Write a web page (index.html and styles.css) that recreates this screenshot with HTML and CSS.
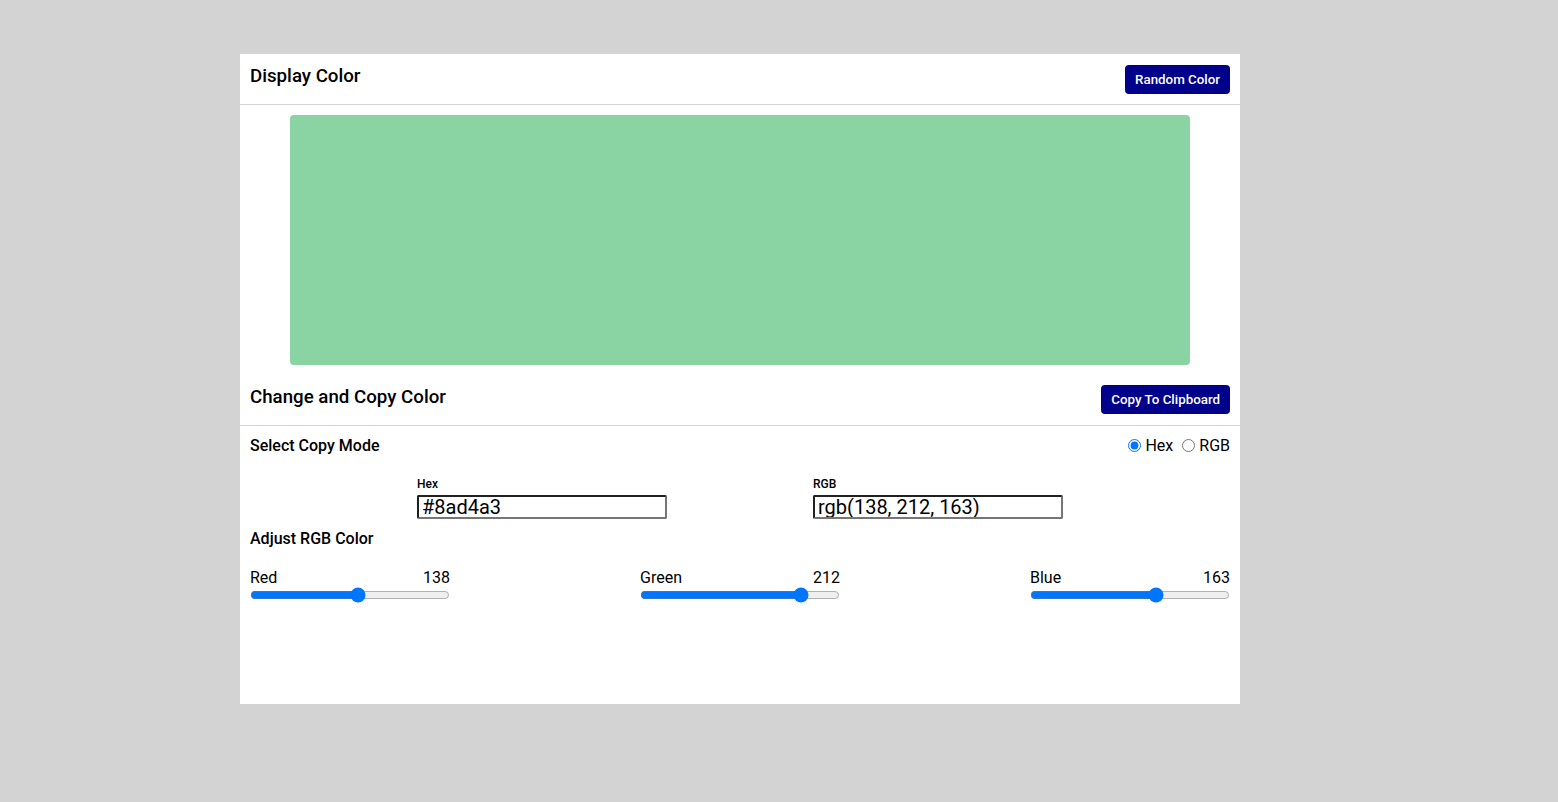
FILE: index.html
```html
<!DOCTYPE html>
<html>
<head>
<meta charset="utf-8">
<link rel="stylesheet" href="styles.css">
</head>
<body>
<div class="card">
  <div class="head head-top">
    <h3 class="title">Display Color</h3>
    <button class="btn">Random Color</button>
  </div>
  <div class="swatch-wrap">
    <div class="swatch" style="background:#8ad4a3"></div>
  </div>
  <div class="head head-second">
    <h3 class="title">Change and Copy Color</h3>
    <button class="btn">Copy To Clipboard</button>
  </div>
  <div class="body">
    <div class="mode-row">
      <h4 class="sub">Select Copy Mode</h4>
      <div class="radios">
        <label class="radio"><input type="radio" name="mode" checked>Hex</label>
        <label class="radio radio-second"><input type="radio" name="mode">RGB</label>
      </div>
    </div>
    <div class="inputs">
      <div class="field">
        <label class="field-label">Hex</label>
        <input class="text" type="text" value="#8ad4a3">
      </div>
      <div class="field">
        <label class="field-label">RGB</label>
        <input class="text" type="text" value="rgb(138, 212, 163)">
      </div>
    </div>
    <h4 class="sub sub-adjust">Adjust RGB Color</h4>
    <div class="sliders">
      <div class="slider">
        <div class="slider-top"><span>Red</span><span>138</span></div>
        <input class="range" type="range" min="0" max="255" value="138">
      </div>
      <div class="slider">
        <div class="slider-top"><span>Green</span><span>212</span></div>
        <input class="range" type="range" min="0" max="255" value="212">
      </div>
      <div class="slider">
        <div class="slider-top"><span>Blue</span><span>163</span></div>
        <input class="range" type="range" min="0" max="255" value="163">
      </div>
    </div>
  </div>
</div>
</body>
</html>
```

FILE: styles.css
```css
html, body {
  margin: 0;
  padding: 0;
}
body {
  background: #d3d3d3;
  font-family: Roboto, "Liberation Sans", sans-serif;
  color: #000;
  padding-top: 54px;
  padding-left: 240px;
  height: 802px;
  box-sizing: border-box;
}
.card {
  width: 1000px;
  height: 650px;
  background: #fff;
}
.head {
  display: flex;
  justify-content: space-between;
  align-items: center;
  padding: 0 10px;
  border-bottom: 1px solid #d3d3d3;
  box-sizing: border-box;
}
.head-top {
  height: 51px;
}
.head-second {
  height: 61px;
  padding-top: 8px;
}
.title {
  margin: 0;
  font-size: 18.72px;
  font-weight: 500;
  line-height: 22px;
  margin-top: -7px;
}
.head-second .title {
  margin-top: -4px;
}
.btn {
  background: #00008b;
  color: #fff;
  border: none;
  border-radius: 4px;
  font-family: Roboto, "Liberation Sans", sans-serif;
  font-size: 13.33px;
  font-weight: 500;
  height: 29px;
  padding: 0 10px;
}
.head-top .btn {
  margin-top: 1px;
}
.swatch-wrap {
  padding-top: 10px;
  display: flex;
  justify-content: center;
}
.swatch {
  width: 900px;
  height: 250px;
  border-radius: 4px;
}
.body {
  padding: 0 10px;
}
.mode-row {
  display: flex;
  justify-content: space-between;
  align-items: center;
  height: 40px;
}
.sub {
  margin: 0;
  font-size: 16px;
  font-weight: 500;
  line-height: 20px;
}
.radios {
  display: flex;
  align-items: center;
  font-size: 16px;
  margin-top: -2px;
}
.radio {
  display: flex;
  align-items: center;
}
.radio input {
  margin: 0 4px 0 1px;
}
.radio-second input {
  margin-left: 9px;
}
.inputs {
  display: flex;
  justify-content: center;
  gap: 146px;
  margin-top: 10px;
}
.field {
  display: flex;
  flex-direction: column;
}
.field-label {
  font-size: 12px;
  font-weight: 500;
  line-height: 16px;
  margin-bottom: 3px;
}
.text {
  width: 250px;
  height: 24px;
  box-sizing: border-box;
  font-family: Roboto, "Liberation Sans", sans-serif;
  font-size: 20px;
  padding: 0 3px;
  border: 2px inset #767676;
  border-radius: 2px;
  color: #000;
}
.sub-adjust {
  margin-top: 10px;
}
.sliders {
  display: flex;
  justify-content: space-between;
  margin-top: 19px;
}
.slider {
  width: 200px;
  display: flex;
  flex-direction: column;
}
.slider-top {
  display: flex;
  justify-content: space-between;
  font-size: 16px;
  line-height: 19px;
}
.range {
  width: 200px;
  margin: 0;
}
```
